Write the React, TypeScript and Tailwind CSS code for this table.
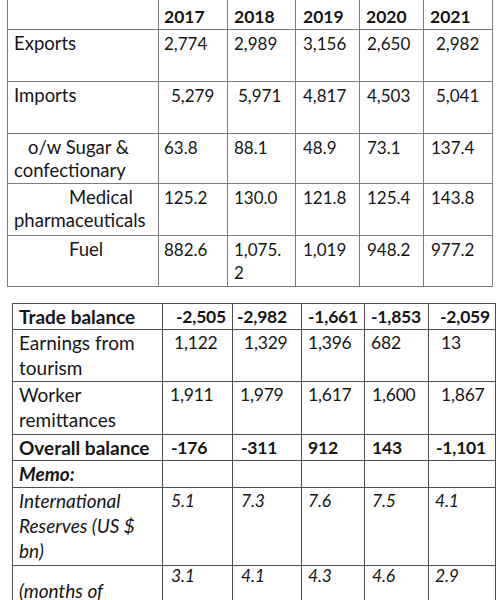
type Cell = [string, number];

const t1Head: Cell[] = [
  ["2017", 5],
  ["2018", 6],
  ["2019", 7],
  ["2020", 6],
  ["2021", 6],
];

const t1Rows: { label: Cell[]; vals: (Cell | [string, number, string])[]; h: number }[] = [
  {
    label: [["Exports", 6]],
    vals: [["2,774", 5], ["2,989", 6], ["3,156", 7], ["2,650", 7], ["2,982", 12]],
    h: 52,
  },
  {
    label: [["Imports", 6]],
    vals: [["5,279", 12], ["5,971", 10], ["4,817", 7], ["4,503", 7], ["5,041", 12]],
    h: 52,
  },
  {
    label: [["o/w Sugar &", 20], ["confectionary", 6]],
    vals: [["63.8", 5], ["88.1", 6], ["48.9", 7], ["73.1", 7], ["137.4", 7]],
    h: 50,
  },
  {
    label: [["Medical", 61], ["pharmaceuticals", 6]],
    vals: [["125.2", 5], ["130.0", 6], ["121.8", 7], ["125.4", 7], ["143.8", 7]],
    h: 52,
  },
  {
    label: [["Fuel", 61]],
    vals: [["882.6", 5], ["1,075.", 6, "2"], ["1,019", 7], ["948.2", 7], ["977.2", 7]],
    h: 51,
  },
];

type Row2 = {
  label: Cell[];
  vals: Cell[];
  h: number;
  style: string;
  labelPt?: string;
  valPt?: string;
};

const t2Rows: Row2[] = [
  {
    label: [["Trade balance", 6]],
    vals: [["-2,505", 13], ["-2,982", 4], ["-1,661", 6], ["-1,853", 6], ["-2,059", 11]],
    h: 26,
    style: "font-bold",
  },
  {
    label: [["Earnings from", 6], ["tourism", 6]],
    vals: [["1,122", 11], ["1,329", 11], ["1,396", 6], ["682", 6], ["13", 12]],
    h: 52,
    style: "",
  },
  {
    label: [["Worker", 6], ["remittances", 6]],
    vals: [["1,911", 7], ["1,979", 7], ["1,617", 6], ["1,600", 7], ["1,867", 12]],
    h: 53,
    style: "",
  },
  {
    label: [["Overall balance", 6]],
    vals: [["-176", 8], ["-311", 8], ["912", 6], ["143", 7], ["-1,101", 7]],
    h: 26,
    style: "font-bold",
  },
  {
    label: [["Memo:", 6]],
    vals: [["", 0], ["", 0], ["", 0], ["", 0], ["", 0]],
    h: 27,
    style: "font-bold italic",
  },
  {
    label: [["International", 6], ["Reserves (US $", 6], ["bn)", 6]],
    vals: [["5.1", 8], ["7.3", 8], ["7.6", 6], ["7.5", 7], ["4.1", 6]],
    h: 78,
    style: "italic",
  },
  {
    label: [["(months of", 6]],
    vals: [["3.1", 8], ["4.1", 8], ["4.3", 6], ["4.6", 7], ["2.9", 6]],
    h: 60,
    style: "italic",
    labelPt: "pt-[12px]",
    valPt: "leading-[19px] pt-[0px]",
  },
];

const b1 = "border border-[#7d7d7d]";
const b2 = "border border-[#4d4d4d]";

export default function App() {
  return (
    <div
      className="w-[500px] h-[600px] overflow-hidden bg-white text-[#151515]"
      style={{ fontFamily: "Lato, 'Open Sans', sans-serif" }}
    >
      <div className="pl-[7px]">
        <table className="table-fixed border-collapse w-[486px] leading-[23px]">
          <colgroup>
            <col className="w-[151px]" />
            <col className="w-[69px]" />
            <col className="w-[68px]" />
            <col className="w-[64px]" />
            <col className="w-[64px]" />
            <col className="w-[69px]" />
          </colgroup>
          <tbody>
            <tr className="h-[29px]">
              <td className={`${b1} border-t-0`} />
              {t1Head.map(([y, pl]) => (
                <td key={y} className={`${b1} border-t-0 align-bottom pb-[1px] text-[17.5px] font-bold`}>
                  <div style={{ paddingLeft: pl }}>{y}</div>
                </td>
              ))}
            </tr>
            {t1Rows.map((r, i) => (
              <tr key={i} style={{ height: r.h }}>
                <td className={`${b1} align-top pt-[2px] text-[18.5px]`}>
                  {r.label.map(([t, pl]) => (
                    <div key={t} style={{ paddingLeft: pl }} className="whitespace-nowrap">
                      {t}
                    </div>
                  ))}
                </td>
                {r.vals.map((v, j) => (
                  <td key={j} className={`${b1} align-top pt-[2px] text-[17px]`}>
                    <div style={{ paddingLeft: v[1] }}>{v[0]}</div>
                    {v[2] && <div style={{ paddingLeft: v[1] }}>{v[2]}</div>}
                  </td>
                ))}
              </tr>
            ))}
          </tbody>
        </table>
      </div>

      <div className="pl-[12px] pt-[16px]">
        <table className="table-fixed border-collapse w-[484px] leading-[25px]">
          <colgroup>
            <col className="w-[150px]" />
            <col className="w-[70px]" />
            <col className="w-[69px]" />
            <col className="w-[63px]" />
            <col className="w-[64px]" />
            <col className="w-[67px]" />
          </colgroup>
          <tbody>
            {t2Rows.map((r, i) => (
              <tr key={i} style={{ height: r.h }} className={r.style}>
                <td className={`${b2} align-top text-[19px] ${r.labelPt ?? "pt-[0px]"}`}>
                  {r.label.map(([t, pl]) => (
                    <div key={t} style={{ paddingLeft: pl }} className="whitespace-nowrap">
                      {t}
                    </div>
                  ))}
                </td>
                {r.vals.map(([t, pl], j) => (
                  <td key={j} className={`${b2} align-top text-[17.5px] ${r.valPt ?? "pt-[0px]"}`}>
                    <div style={{ paddingLeft: pl }} className="whitespace-nowrap tracking-[-0.2px]">
                      {t}
                    </div>
                  </td>
                ))}
              </tr>
            ))}
          </tbody>
        </table>
      </div>
    </div>
  );
}
